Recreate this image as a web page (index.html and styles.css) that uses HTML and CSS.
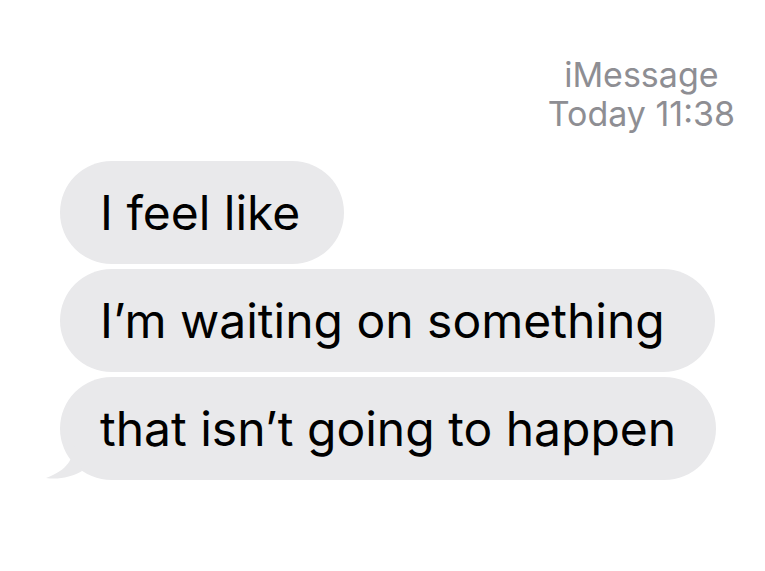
FILE: index.html
```html
<!DOCTYPE html>
<html>
<head>
<meta charset="utf-8">
<link rel="stylesheet" href="styles.css">
</head>
<body>
<div class="screen">
  <div class="header">
    <div>iMessage</div>
    <div>Today 11:38</div>
  </div>
  <div class="thread">
    <div class="bubble first">I feel like</div>
    <div class="bubble">I’m waiting on something</div>
    <div class="bubble last">that isn’t going to happen
      <svg class="tail" width="40" height="36" viewBox="0 0 40 36"><path d="M30 0 C30 14 24 26 2 34 C14 36 28 33 38 27 Z" fill="#e9e9eb"/></svg>
    </div>
  </div>
</div>
</body>
</html>
```
FILE: styles.css
```css
html, body {
  margin: 0;
  padding: 0;
  background: #ffffff;
}
.screen {
  width: 765px;
  height: 571px;
  display: flex;
  flex-direction: column;
  font-family: Inter, "Open Sans", sans-serif;
}
.header {
  align-self: flex-end;
  margin-right: 30px;
  margin-top: 55px;
  text-align: center;
  color: #8e8e93;
  font-size: 34px;
  line-height: 39px;
}
.thread {
  display: flex;
  flex-direction: column;
  align-items: flex-start;
  gap: 5px;
  margin-top: 28px;
  padding-left: 60px;
}
.bubble {
  position: relative;
  background: #e9e9eb;
  color: #000;
  font-size: 48px;
  line-height: 60px;
  padding: 22px 50px 21px 40px;
  border-radius: 52px;
  white-space: nowrap;
}
.bubble.first {
  padding-right: 44px;
}
.bubble.last {
  padding-right: 40px;
}
.tail {
  position: absolute;
  left: -16px;
  bottom: 0;
}
```
